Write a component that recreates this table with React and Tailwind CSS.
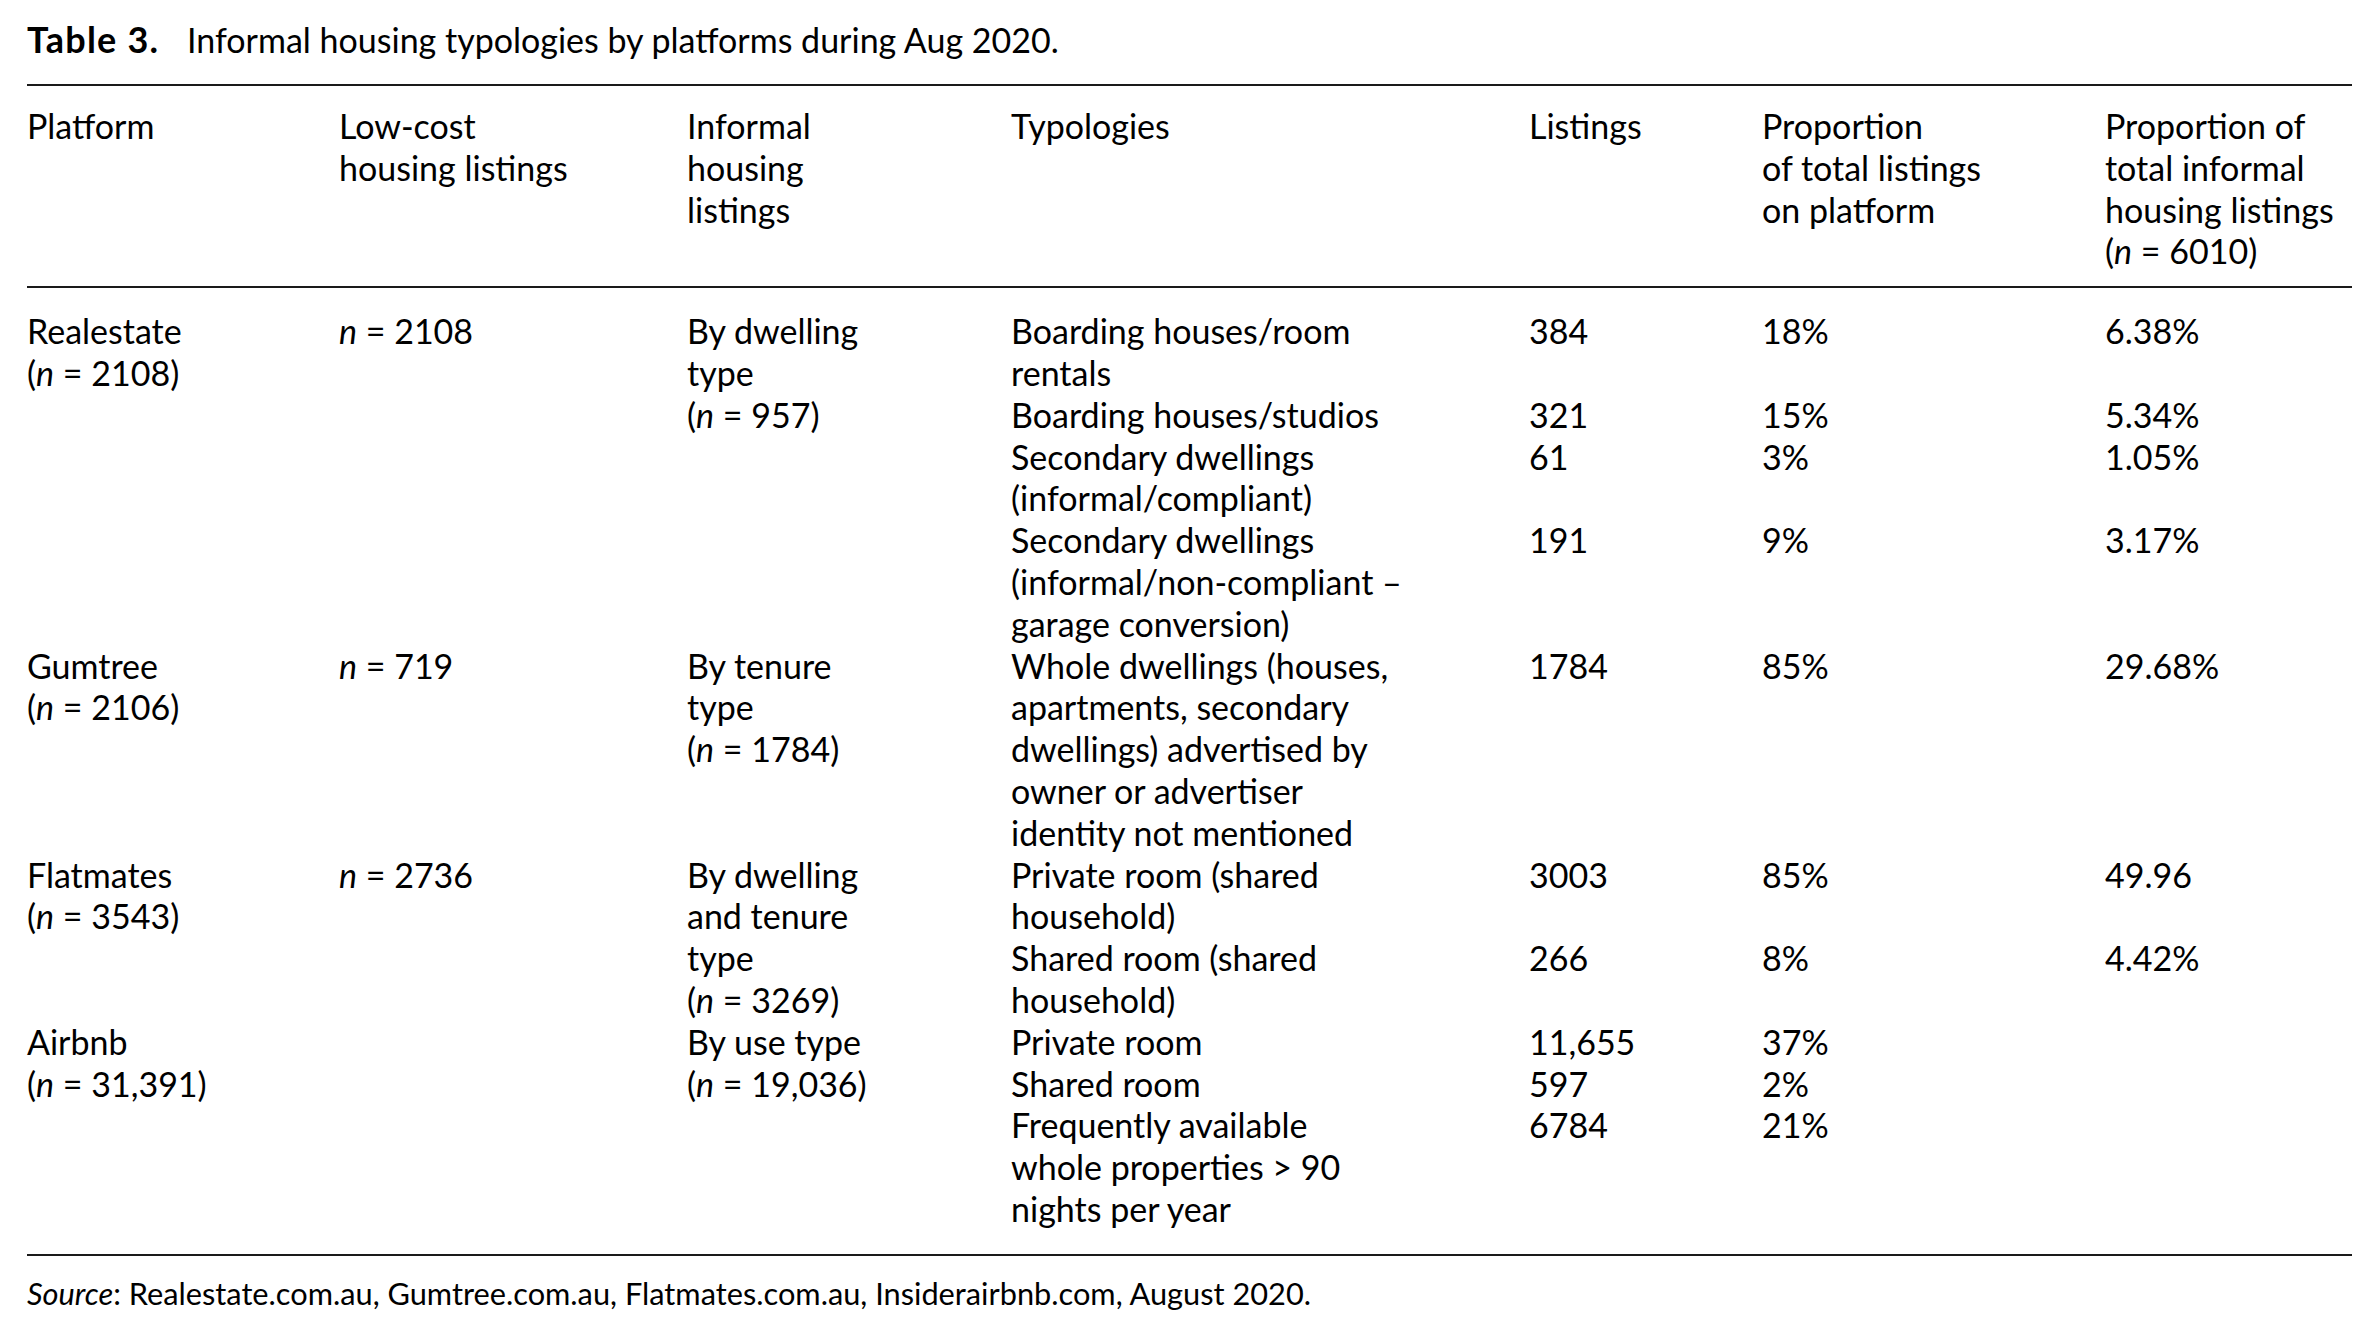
const N = ({ v, p = true }) =>
    p ? (
        <>
            (<i>n</i> = {v})
        </>
    ) : (
        <>
            <i>n</i> = {v}
        </>
    );

const groups = [
    {
        platform: ['Realestate', <N v="2108" />],
        lowcost: <N v="2108" p={false} />,
        informal: ['By dwelling', 'type', <N v="957" />],
        rows: [
            [['Boarding houses/room', 'rentals'], '384', '18%', '6.38%'],
            [['Boarding houses/studios'], '321', '15%', '5.34%'],
            [['Secondary dwellings', '(informal/compliant)'], '61', '3%', '1.05%'],
            [['Secondary dwellings', '(informal/non-compliant –', 'garage conversion)'], '191', '9%', '3.17%'],
        ],
    },
    {
        platform: ['Gumtree', <N v="2106" />],
        lowcost: <N v="719" p={false} />,
        informal: ['By tenure', 'type', <N v="1784" />],
        rows: [
            [
                ['Whole dwellings (houses,', 'apartments, secondary', 'dwellings) advertised by', 'owner or advertiser', 'identity not mentioned'],
                '1784',
                '85%',
                '29.68%',
            ],
        ],
    },
    {
        platform: ['Flatmates', <N v="3543" />],
        lowcost: <N v="2736" p={false} />,
        informal: ['By dwelling', 'and tenure', 'type', <N v="3269" />],
        rows: [
            [['Private room (shared', 'household)'], '3003', '85%', '49.96'],
            [['Shared room (shared', 'household)'], '266', '8%', '4.42%'],
        ],
    },
    {
        platform: ['Airbnb', <N v="31,391" />],
        lowcost: null,
        informal: ['By use type', <N v="19,036" />],
        rows: [
            [['Private room'], '11,655', '37%', ''],
            [['Shared room'], '597', '2%', ''],
            [['Frequently available', 'whole properties > 90', 'nights per year'], '6784', '21%', ''],
        ],
    },
];

const Lines = ({ items }) =>
    items.map((t, i) => (
        <div key={i}>{t}</div>
    ));

const headers = [
    ['Platform'],
    ['Low-cost', 'housing listings'],
    ['Informal', 'housing', 'listings'],
    ['Typologies'],
    ['Listings'],
    ['Proportion', 'of total listings', 'on platform'],
    ['Proportion of', 'total informal', 'housing listings', <N v="6010" />],
];

export default function App() {
    return (
        <div className="min-h-screen bg-white text-black font-['Lato',sans-serif] pl-[27px] pt-[18px]">
            <h1 className="text-[34px] leading-[42px] whitespace-nowrap">
                <span className="inline-block w-[160px] text-[36px] font-bold tracking-[1.2px]">Table 3.</span>
                <span>Informal housing typologies by platforms during Aug 2020.</span>
            </h1>

            <table className="mt-[23px] w-[2325px] table-fixed text-[34px] leading-[41.8px]">
                <colgroup>
                    <col className="w-[312px]" />
                    <col className="w-[348px]" />
                    <col className="w-[324px]" />
                    <col className="w-[518px]" />
                    <col className="w-[233px]" />
                    <col className="w-[343px]" />
                    <col className="w-[247px]" />
                </colgroup>
                <thead>
                    <tr>
                        {headers.map((h, i) => (
                            <th
                                key={i}
                                className="border-t-2 border-b-2 border-[#1a1a1a] pt-[19px] pb-[14px] text-left align-top font-normal whitespace-nowrap"
                            >
                                <Lines items={h} />
                            </th>
                        ))}
                    </tr>
                </thead>
                <tbody>
                    {groups.map((g, gi) =>
                        g.rows.map((r, ri) => {
                            const first = gi === 0 && ri === 0;
                            const last = gi === groups.length - 1 && ri === g.rows.length - 1;
                            const pad = `${first ? 'pt-[22px]' : ''} ${last ? 'pb-[24px] border-b-2 border-[#1a1a1a]' : ''}`;
                            const spanEdge = gi === groups.length - 1 ? 'border-b-2 border-[#1a1a1a]' : '';
                            return (
                                <tr key={`${gi}-${ri}`}>
                                    {ri === 0 && (
                                        <>
                                            <td rowSpan={g.rows.length} className={`align-top whitespace-nowrap ${pad} ${spanEdge}`}>
                                                <Lines items={g.platform} />
                                            </td>
                                            <td rowSpan={g.rows.length} className={`align-top whitespace-nowrap ${pad} ${spanEdge}`}>
                                                {g.lowcost}
                                            </td>
                                            <td rowSpan={g.rows.length} className={`align-top whitespace-nowrap ${pad} ${spanEdge}`}>
                                                <Lines items={g.informal} />
                                            </td>
                                        </>
                                    )}
                                    <td className={`align-top whitespace-nowrap ${pad}`}>
                                        <Lines items={r[0]} />
                                    </td>
                                    <td className={`align-top ${pad}`}>{r[1]}</td>
                                    <td className={`align-top ${pad}`}>{r[2]}</td>
                                    <td className={`align-top ${pad}`}>{r[3]}</td>
                                </tr>
                            );
                        })
                    )}
                </tbody>
            </table>

            <p className="mt-[18px] text-[30.75px] leading-[40px] whitespace-nowrap">
                <i>Source</i>: Realestate.com.au, Gumtree.com.au, Flatmates.com.au, Insiderairbnb.com, August 2020.
            </p>
        </div>
    );
}
